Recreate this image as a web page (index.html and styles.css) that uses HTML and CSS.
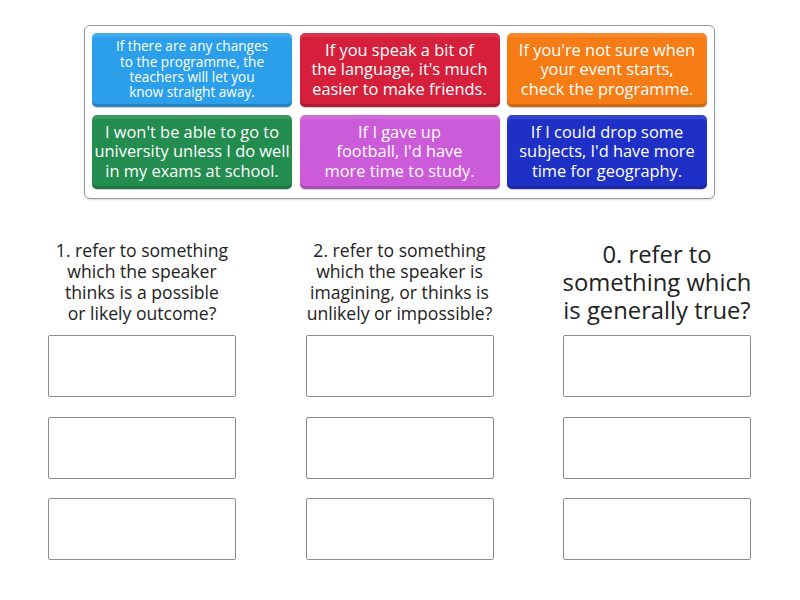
FILE: index.html
```html
<!DOCTYPE html>
<html>
<head>
<meta charset="utf-8">
<link rel="stylesheet" href="styles.css">
</head>
<body>
<div class="bank">
  <div class="tile t-blue small">If there are any changes<br>to the programme, the<br>teachers will let you<br>know straight away.</div>
  <div class="tile t-red">If you speak a bit of<br>the language, it's much<br>easier to make friends.</div>
  <div class="tile t-orange">If you're not sure when<br>your event starts,<br>check the programme.</div>
  <div class="tile t-green">I won't be able to go to<br>university unless I do well<br>in my exams at school.</div>
  <div class="tile t-pink">If I gave up<br>football, I'd have<br>more time to study.</div>
  <div class="tile t-indigo">If I could drop some<br>subjects, I'd have more<br>time for geography.</div>
</div>
<div class="board">
  <div class="col">
    <div class="head">1. refer to something<br>which the speaker<br>thinks is a possible<br>or likely outcome?</div>
    <div class="slot"></div>
    <div class="slot"></div>
    <div class="slot"></div>
  </div>
  <div class="col">
    <div class="head">2. refer to something<br>which the speaker is<br>imagining, or thinks is<br>unlikely or impossible?</div>
    <div class="slot"></div>
    <div class="slot"></div>
    <div class="slot"></div>
  </div>
  <div class="col">
    <div class="head big">0. refer to<br>something which<br>is generally true?</div>
    <div class="slot"></div>
    <div class="slot"></div>
    <div class="slot"></div>
  </div>
</div>
</body>
</html>
```
FILE: styles.css
```css
html, body {
  margin: 0;
  padding: 0;
  background: #fff;
}
body {
  font-family: "Open Sans", "Noto Sans", sans-serif;
  color: #222;
  width: 800px;
  height: 600px;
  overflow: hidden;
}
.bank {
  margin: 25px 0 0 84px;
  width: 615px;
  padding: 7px 7px 9px;
  border: 1px solid #9a9a9a;
  border-radius: 6px;
  display: grid;
  grid-template-columns: 200px 200px 200px;
  grid-auto-rows: 74px;
  column-gap: 7.5px;
  row-gap: 8px;
  box-shadow: 0 1px 2px rgba(0,0,0,0.15);
}
.tile {
  display: flex;
  align-items: center;
  justify-content: center;
  text-align: center;
  white-space: nowrap;
  color: #fff;
  font-size: 16.4px;
  line-height: 19.5px;
  padding: 0 0 2px;
  border-radius: 5px;
  box-shadow: inset 0 -3px 0 rgba(0,0,0,0.16), inset 0 4px 0 rgba(255,255,255,0.10), 0 1px 1px rgba(0,0,0,0.2);
}
.tile.small {
  font-size: 13.6px;
  line-height: 15.3px;
}
.t-blue { background: #2b9fe9; }
.t-red { background: #d61f3a; }
.t-orange { background: #f67c15; }
.t-green { background: #238c4f; }
.t-pink { background: #cb5bd9; }
.t-indigo { background: #1f30c6; }

.board {
  margin: 41px 0 0 48px;
  display: grid;
  grid-template-columns: 188px 188px 188px;
  column-gap: 69.5px;
}
.col {
  display: flex;
  flex-direction: column;
  gap: 19.5px;
}
.head {
  height: 84px;
  margin: 0 -30px -8.5px;
  text-align: center;
  white-space: nowrap;
  font-size: 17.6px;
  line-height: 21px;
  color: #222;
}
.head.big {
  font-size: 23.8px;
  line-height: 28px;
}
.slot {
  height: 60px;
  border: 1px solid #8c8c8c;
  border-radius: 2px;
  background: #fff;
}
```
